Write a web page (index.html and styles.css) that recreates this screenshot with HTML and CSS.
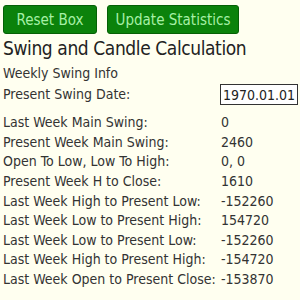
FILE: index.html
```html
<!DOCTYPE html>
<html lang="en">
<head>
    <meta charset="UTF-8">
    <title>Swing and Candle Calculation</title>
    <link rel="stylesheet" href="styles.css">
</head>
<body>
    <div class="toolbar">
        <button class="green-btn reset-btn">Reset Box</button>
        <button class="green-btn update-btn">Update Statistics</button>
    </div>

    <h1>Swing and Candle Calculation</h1>

    <div class="section-title">Weekly Swing Info</div>
    <div class="date-row">
        <span>Present Swing Date:</span>
        <input class="date-input" type="text" value="1970.01.01">
    </div>

    <table class="stats">
        <tr><td>Last Week Main Swing:</td><td>0</td></tr>
        <tr><td>Present Week Main Swing:</td><td>2460</td></tr>
        <tr><td>Open To Low, Low To High:</td><td>0, 0</td></tr>
        <tr><td>Present Week H to Close:</td><td>1610</td></tr>
        <tr><td>Last Week High to Present Low:</td><td>-152260</td></tr>
        <tr><td>Last Week Low to Present High:</td><td>154720</td></tr>
        <tr><td>Last Week Low to Present Low:</td><td>-152260</td></tr>
        <tr><td>Last Week High to Present High:</td><td>-154720</td></tr>
        <tr><td>Last Week Open to Present Close:</td><td>-153870</td></tr>
    </table>
</body>
</html>
```

FILE: styles.css
```css
* {
    box-sizing: border-box;
    margin: 0;
    padding: 0;
}

body {
    font-family: 'DejaVu Sans Condensed', 'DejaVu Sans', sans-serif;
    font-size: 14px;
    line-height: 19px;
    color: #333;
    background-color: #fffff0;
    padding: 5px 3px;
}

.toolbar {
    display: flex;
    gap: 10px;
}

.green-btn {
    height: 29px;
    background-color: #0b820b;
    color: #a6f0a6;
    border: 1px solid #056005;
    border-radius: 3px;
    font-family: inherit;
    font-size: 15px;
}

.reset-btn {
    width: 94px;
}

.update-btn {
    width: 132px;
}

h1 {
    font-size: 19px;
    letter-spacing: -0.4px;
    font-weight: normal;
    color: #222;
    line-height: 26px;
    margin-top: 1px;
}

.section-title {
    margin-top: 3px;
}

.date-row {
    display: flex;
    justify-content: space-between;
    align-items: center;
    margin-top: 1px;
}

.date-input {
    width: 78px;
    height: 21px;
    border: 1px solid #333;
    background: #fff;
    font-family: inherit;
    font-size: 14px;
    color: #222;
    padding: 0 2px;
    margin-right: -1px;
}

.stats {
    border-collapse: collapse;
    margin-top: 8px;
}

.stats td {
    padding: 0;
    height: 19.6px;
    white-space: nowrap;
}

.stats td:first-child {
    width: 218px;
}
```
